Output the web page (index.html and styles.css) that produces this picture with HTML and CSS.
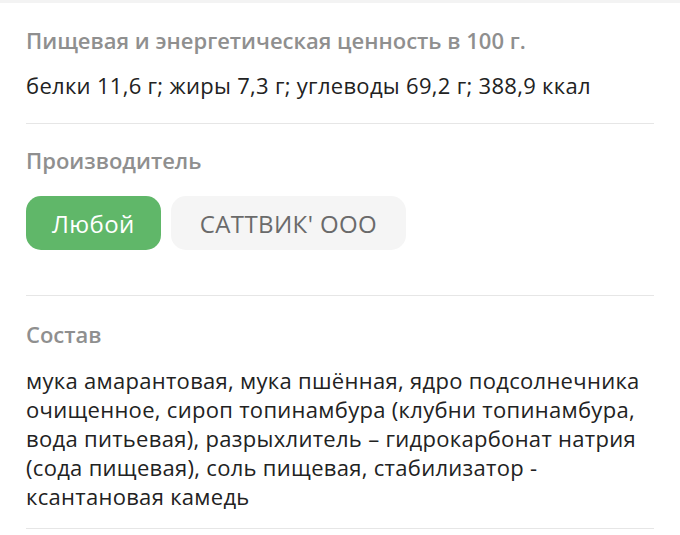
FILE: index.html
```html
<!DOCTYPE html>
<html lang="ru">
<head>
<meta charset="utf-8">
<link rel="stylesheet" href="styles.css">
</head>
<body>
<div class="topband"></div>
<main class="content">
  <section class="block block-nutrition">
    <h2 class="title">Пищевая и энергетическая ценность в 100 г.</h2>
    <p class="text">белки 11,6 г; жиры 7,3 г; углеводы 69,2 г; 388,9 ккал</p>
  </section>
  <section class="block block-maker">
    <h2 class="title">Производитель</h2>
    <div class="chips">
      <button class="chip chip-active">Любой</button>
      <button class="chip">САТТВИК' ООО</button>
    </div>
  </section>
  <section class="block block-composition">
    <h2 class="title">Состав</h2>
    <p class="text">мука амарантовая, мука пшённая, ядро подсолнечника очищенное, сироп топинамбура (клубни топинамбура, вода питьевая), разрыхлитель – гидрокарбонат натрия (сода пищевая), соль пищевая, стабилизатор - ксантановая камедь</p>
  </section>
</main>
</body>
</html>
```
FILE: styles.css
```css
html, body {
  margin: 0;
  padding: 0;
  background: #ffffff;
}
body {
  font-family: "Open Sans", "Noto Sans", sans-serif;
  color: #222222;
}
.topband {
  height: 3px;
  background: #f3f3f3;
}
.content {
  padding: 0 26px;
}
.block {
  border-bottom: 1px solid #e6e6e6;
}
.title {
  margin: 0;
  font-size: 22px;
  font-weight: 600;
  color: #8f8f8f;
  line-height: 24px;
}
.text {
  margin: 0;
  font-size: 22px;
  letter-spacing: 0.3px;
  line-height: 29px;
}
.block-nutrition .title {
  padding-top: 25px;
}
.block-nutrition .text {
  padding: 19px 0 23px;
}
.block-maker .title {
  padding-top: 24px;
}
.chips {
  display: flex;
  gap: 10px;
  padding: 24px 0 45px;
}
.chip {
  font-family: inherit;
  border: none;
  height: 54px;
  padding: 0 29px;
  border-radius: 15px;
  font-size: 24px;
  letter-spacing: 0.4px;
  background: #f5f5f5;
  color: #6a6a6a;
}
.chip-active {
  padding: 0 26px;
  background: #60b769;
  color: #ffffff;
}
.block-composition .title {
  padding-top: 26px;
}
.block-composition .text {
  padding: 20px 0 17px;
}
```
